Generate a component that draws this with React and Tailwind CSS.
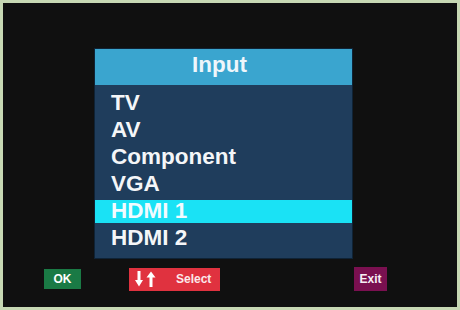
export default function App() {
  const items = ["TV", "AV", "Component", "VGA", "HDMI 1", "HDMI 2"];
  return (
    <div className="w-[460px] h-[310px] bg-[#c7d8b4] p-[3px]" style={{ fontFamily: '"Liberation Sans", Arial, sans-serif' }}>
      <div className="w-full h-full bg-[#101010] flex flex-col items-start pt-[45px]">
        <div className="w-[259px] flex flex-col border border-[#0f2336] ml-[91px]">
          <div className="h-[36px] bg-[#3aa5cf] flex items-center justify-center pb-[4px] pr-[8px]">
            <span className="text-[22.5px] font-bold text-[#eef6fb] leading-none">Input</span>
          </div>
          <div className="bg-[#1f3d5c] pt-[7px] pb-[8px] flex flex-col gap-[4px]">
            {items.map((t) => (
              <div
                key={t}
                className={
                  "h-[23px] flex items-center pl-[16px] text-[22.5px] font-bold leading-none " +
                  (t === "HDMI 1" ? "bg-[#1ae2f5] text-[#f2fbff]" : "text-[#f4f6f8]")
                }
              >
                {t}
              </div>
            ))}
          </div>
        </div>
        <div className="w-full flex items-center mt-[8px] h-[24px]">
          <div className="ml-[41px] w-[37px] h-[20px] bg-[#1a7a45] flex items-center justify-center">
            <span className="text-[12px] font-bold text-white leading-none">OK</span>
          </div>
          <div className="ml-[48px] w-[91px] h-[23px] bg-[#e0323f] flex items-center">
            <svg width="24" height="16" viewBox="0 0 24 16" className="ml-[5px]">
              <path d="M3.5 0 H6.5 V9 H9 L5 15.5 L1 9 H3.5 Z" fill="#ffffff" />
              <path d="M15.5 16 H18.5 V6.5 H21.5 L17 0.5 L12.5 6.5 H15.5 Z" fill="#ffffff" />
            </svg>
            <span className="ml-[18px] text-[12px] font-bold text-[#fbe9ea] leading-none">Select</span>
          </div>
          <div className="ml-[134px] w-[33px] h-[24px] bg-[#7a1050] flex items-center justify-center">
            <span className="text-[12px] font-bold text-[#f7eef4] leading-none">Exit</span>
          </div>
        </div>
      </div>
    </div>
  );
}
